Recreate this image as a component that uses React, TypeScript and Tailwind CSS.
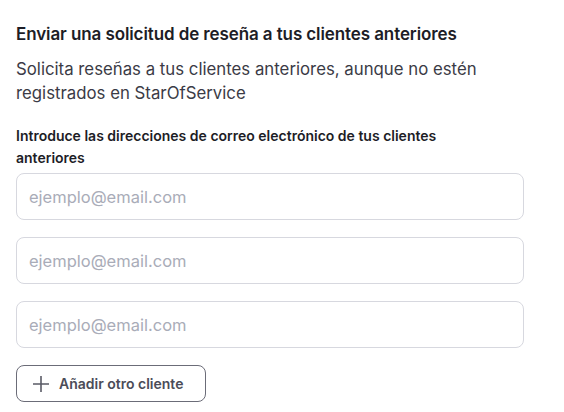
export default function App() {
  const font = { fontFamily: '"Inter", "Open Sans", sans-serif' };
  return (
    <div className="min-h-[412px] w-[564px] bg-white px-4 pt-[23px]" style={font}>
      <h2 className="text-[17px] font-semibold leading-[22px] tracking-[-0.1px] text-[#1d1d26]">
        Enviar una solicitud de reseña a tus clientes anteriores
      </h2>
      <p className="mt-[12px] text-[16.8px] leading-[24px] text-[#3b3b46]">
        Solicita reseñas a tus clientes anteriores, aunque no estén
        <br />
        registrados en StarOfService
      </p>

      <label className="mt-[20px] block w-[470px] text-[14px] font-semibold leading-[22px] text-[#1d1d26]">
        Introduce las direcciones de correo electrónico de tus clientes anteriores
      </label>

      <div className="mt-[4px] flex w-[508px] flex-col gap-[17px]">
        {[0, 1, 2].map((i) => (
          <input
            key={i}
            type="email"
            placeholder="ejemplo@email.com"
            className="h-[47px] w-full rounded-lg border border-[#d7d8df] px-3 text-[16.5px] text-[#3b3b46] outline-none placeholder:text-[#a9acb8]"
            style={font}
          />
        ))}
      </div>

      <button
        className="mt-[17px] flex h-[37px] w-[190px] items-center gap-[9px] rounded-lg border border-[#6b6c78] pl-[15px] text-[14px] font-semibold text-[#4b4c58]"
        style={font}
      >
        <svg width="18" height="18" viewBox="0 0 18 18" fill="none">
          <path d="M9 1v16M1 9h16" stroke="#5a5b66" strokeWidth="1.6" />
        </svg>
        Añadir otro cliente
      </button>
    </div>
  );
}
